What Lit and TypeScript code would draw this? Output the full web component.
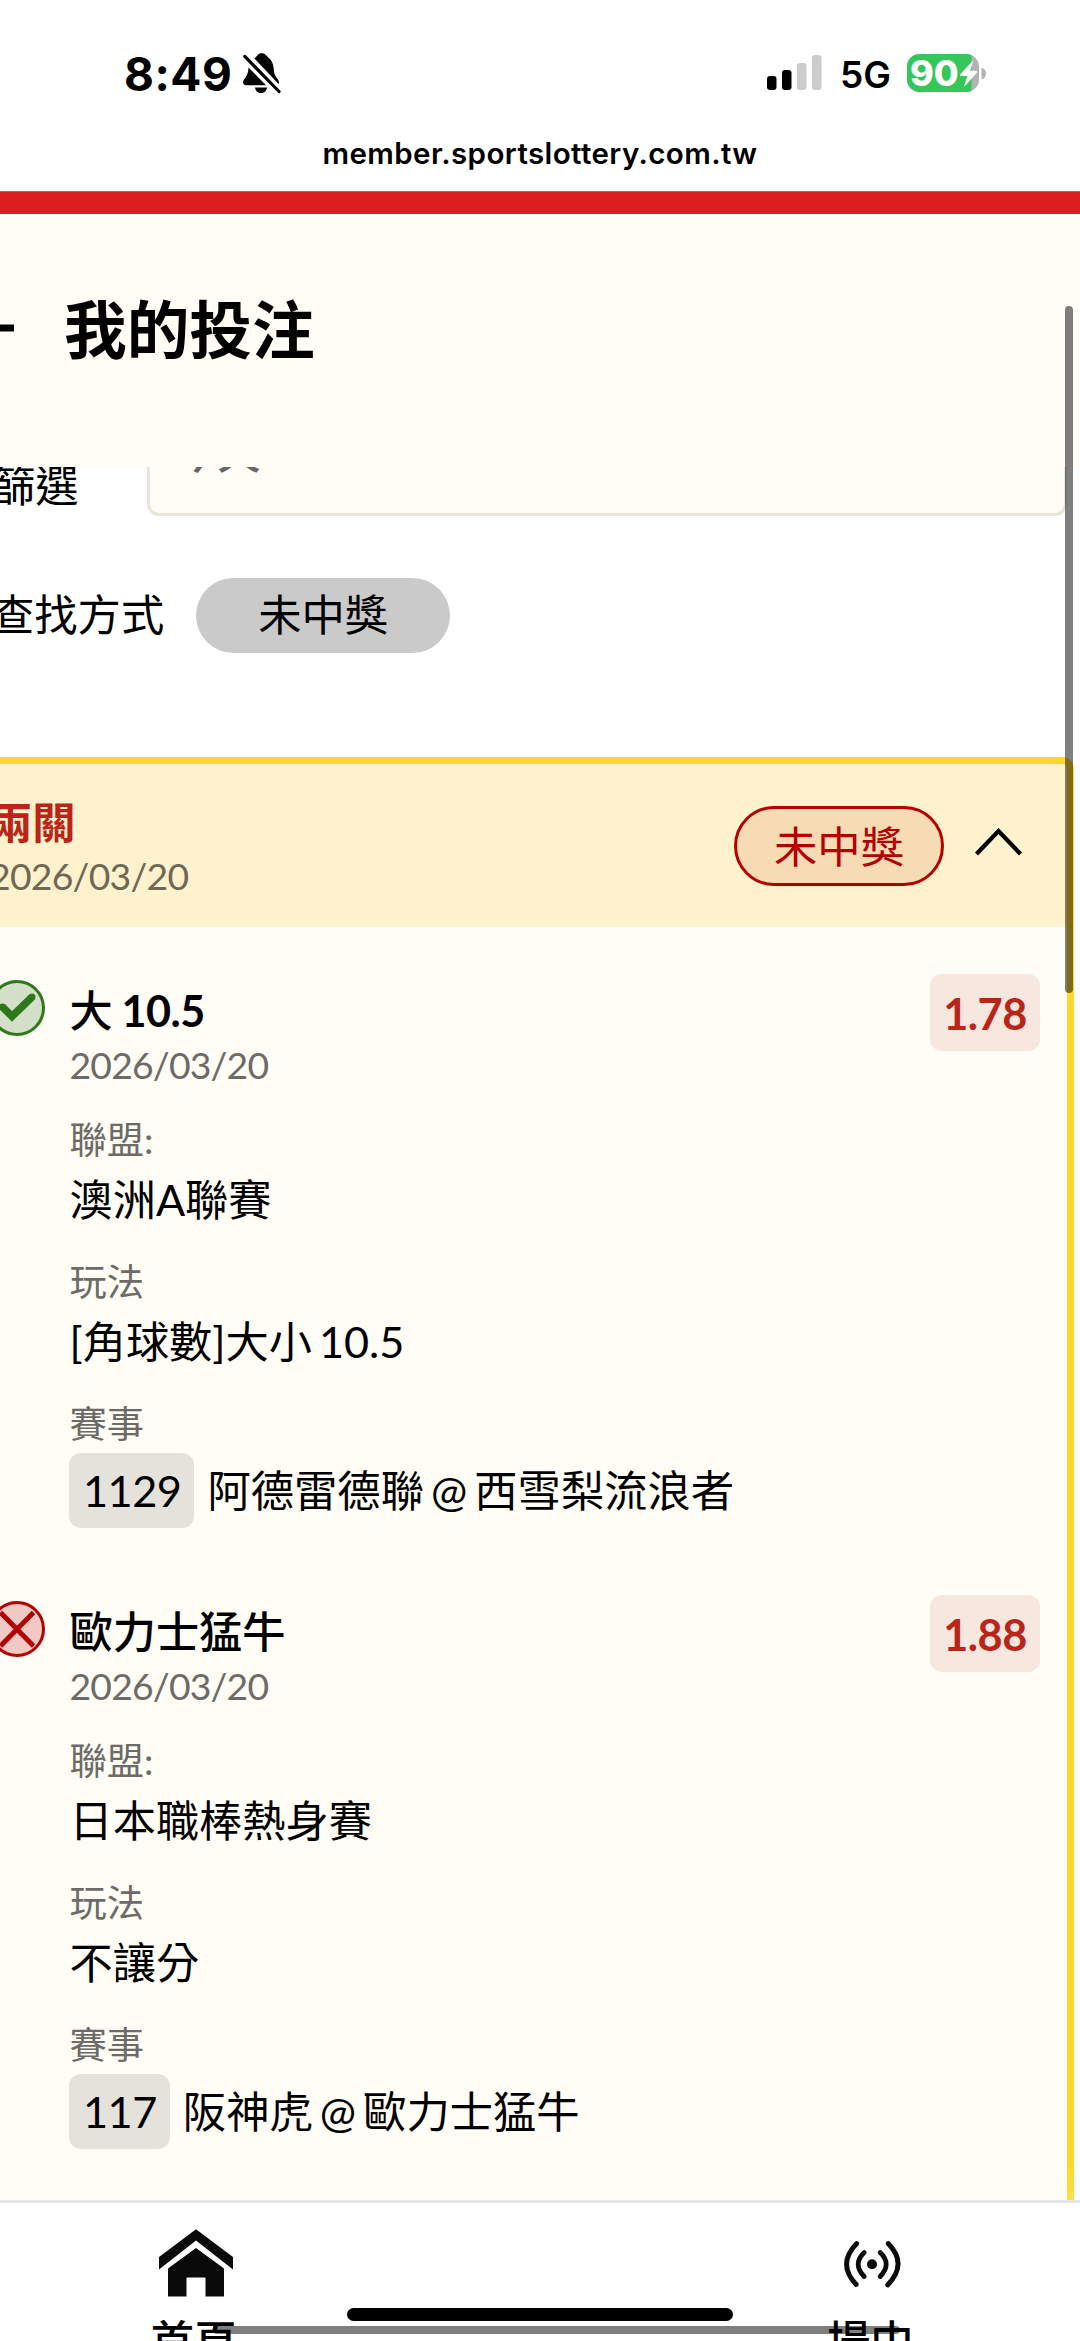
import { LitElement, html, css, svg } from "lit";
import { customElement, property } from "lit/decorators.js";

interface Bet {
  won: boolean;
  pick: string;
  date: string;
  odds: string;
  league: string;
  play: string;
  code: string;
  match: string;
}

const BETS: Bet[] = [
  { won: true, pick: "大 10.5", date: "2026/03/20", odds: "1.78", league: "澳洲A聯賽", play: "[角球數]大小 10.5", code: "1129", match: "阿德雷德聯 @ 西雪梨流浪者" },
  { won: false, pick: "歐力士猛牛", date: "2026/03/20", odds: "1.88", league: "日本職棒熱身賽", play: "不讓分", code: "117", match: "阪神虎 @ 歐力士猛牛" },
];

@customElement("status-bar")
class StatusBar extends LitElement {
  static styles = css`
    :host { display: flex; flex-direction: column; height: 191px; background: #fff; color: #000; font-family: Inter, "Liberation Sans", sans-serif; }
    .row { display: flex; align-items: center; height: 54px; padding: 46px 93px 0 124px; }
    .time { font-size: 46px; font-weight: 750; line-height: 54px; width: 117.500px; white-space: nowrap; letter-spacing: 0.500px; padding-top: 2px; }
    .bell { display: block; }
    .grow { flex: 1; }
    .signal { display: block; margin-right: 18px; }
    .net { font-size: 37px; font-weight: 600; line-height: 56px; width: 67px; white-space: nowrap; padding-top: 3px; }
    .battery { display: grid; width: 80px; height: 40px; margin-top: -1px; }
    .battery > * { grid-area: 1 / 1; }
    .level { font-size: 36px; line-height: 40px; font-weight: 850; color: #fff; padding-left: 3px; }
    .bolt { display: block; }
    .url { padding-top: 33px; text-align: center; font-size: 29.500px; line-height: 40px; font-weight: 600; letter-spacing: 0.400px; }
  `;
  render() {
    return html`
      <div class="row">
        <span class="time">8:49</span>
        <svg class="bell" width="40" height="42" viewBox="0 0 40 42">
          <path d="M12.500 6.500C14 5 14.500 4.200 15.500 3.200C17.500 .6 22 .6 24 3.200C25 4.400 26 5.200 27.500 6.500C30.500 9.500 31.500 13 32 19C32.300 23 34 25 36 27.500C37 29 37.200 30.500 36.500 32Z" />
          <path d="M6.500 15.500L24 33.200H4C1 33.200 .3 30 2 27.500C4.500 24.500 6.200 22 6.500 15.500Z" />
          <path d="M13 35.500H25C24.500 39.200 22 41 19 41S13.500 39.200 13 35.500Z" />
          <path d="M2.800 4.400L38 40.500" stroke="#fff" stroke-width="7" />
          <path d="M2.800 4.400L37 39.500" stroke="#000" stroke-width="3.200" stroke-linecap="round" />
        </svg>
        <span class="grow"></span>
        <svg class="signal" width="55" height="36" viewBox="0 0 55 36">
          <rect x="0" y="21" width="9.500" height="14" rx="3" />
          <rect x="15" y="15" width="9.500" height="20" rx="3" />
          <rect x="30" y="8" width="9.500" height="27" rx="3" fill="#ccc" />
          <rect x="45" y="0" width="9.500" height="35" rx="3" fill="#ccc" />
        </svg>
        <span class="net">5G</span>
        <div class="battery">
          <svg width="80" height="40" viewBox="0 0 80 40">
            <clipPath id="body"><rect x="0" y="1" width="72" height="38" rx="12.500" /></clipPath>
            <g clip-path="url(#body)">
              <rect width="80" height="40" fill="#b3b3b3" />
              <rect width="64.500" height="40" fill="#34c759" />
            </g>
            <path d="M74.500 14.500C77.500 15.500 79 17.500 79 20.500S77.500 25.500 74.500 26.500Z" fill="#b3b3b3" />
          </svg>
          <span class="level">90</span>
          <svg class="bolt" width="80" height="40" viewBox="0 0 80 40">
            <path d="M65.500 8L53 21.500Q52.500 23 54 23H60.500L57 33Q57.500 33.500 58.500 32.500L70 19.500Q70.500 18 69 17.700H63L66 9Z" fill="#fff" />
          </svg>
        </div>
      </div>
      <div class="url">member.sportslottery.com.tw</div>
    `;
  }
}

@customElement("bet-item")
class BetItem extends LitElement {
  @property({ attribute: false }) bet!: Bet;
  static styles = css`
    :host { display: flex; align-items: flex-start; font-family: Lato, "Noto Sans CJK TC", sans-serif; color: #000; }
    .mark { display: block; flex: none; margin: 1px 24.500px 0 0; }
    .info { flex: 1; display: flex; flex-direction: column; align-items: flex-start; white-space: nowrap; }
    .pick { font-size: 43.200px; line-height: 60px; font-weight: 700; height: 60px; padding-top: 1px; box-sizing: border-box; letter-spacing: -0.600px; word-spacing: -1px; }
    .cjk { font-family: "Noto Sans CJK TC", sans-serif; font-weight: 500; line-height: 1; letter-spacing: 0; }
    .date { font-size: 37.300px; line-height: 50px; margin: 1px 0 25px; color: #6c6b68; letter-spacing: -0.800px; }
    .label { font-size: 37.300px; line-height: 50px; color: #6c6b68; }
    .value { font-size: 43.200px; line-height: 60px; margin: 4px 0 28px; word-spacing: -4px; }
    .match { display: flex; align-items: center; gap: 13px; margin-top: 4px; font-size: 43.300px; line-height: 75px; word-spacing: -4px; }
    .code { background: #e5e2dc; border-radius: 12px; padding: 0 13px 0 14px; letter-spacing: -0.500px; margin-left: -0.500px; }
    .odds { flex: none; margin: -5px 0 0; width: 110px; height: 77px; border-radius: 12px; background: #f7e7df; color: #b92518; font-size: 43.300px; font-weight: 700; line-height: 78px; text-align: center; letter-spacing: -0.500px; }
  `;
  private mark() {
    return this.bet.won
      ? svg`<circle cx="28" cy="28" r="26.500" fill="#d4dfc9" stroke="#2f7819" stroke-width="3"/><path d="M13.500 27L23 36.500L43 17" fill="none" stroke="#2f7819" stroke-width="7.500"/><circle cx="43" cy="17" r="3.500" fill="#2f7819"/><circle cx="13.500" cy="27" r="3.500" fill="#2f7819"/>`
      : svg`<circle cx="28" cy="28" r="26.500" fill="#f0c9c4" stroke="#b40000" stroke-width="3"/><path d="M11.500 11.500L44.500 45M44.500 11.500L11.500 45" stroke="#b40000" stroke-width="4.800"/>`;
  }
  render() {
    const b = this.bet;
    return html`
      <svg class="mark" width="56" height="56" viewBox="0 0 56 56">${this.mark()}</svg>
      <div class="info">
        <div class="pick">${b.pick.split(" ").map((t, i) => (i ? html` ${t}` : html`<span class="cjk">${t}</span>`))}</div>
        <div class="date">${b.date}</div>
        <div class="label">聯盟:</div>
        <div class="value">${b.league}</div>
        <div class="label">玩法</div>
        <div class="value">${b.play}</div>
        <div class="label">賽事</div>
        <div class="match"><span class="code">${b.code}</span><span>${b.match}</span></div>
      </div>
      <div class="odds">${b.odds}</div>
    `;
  }
}

@customElement("app-root")
class AppRoot extends LitElement {
  static styles = css`
    :host { display: flex; flex-direction: column; position: relative; width: 1080px; height: 2341px; overflow: hidden; background: #fff; color: #000; font-family: Lato, "Noto Sans CJK TC", sans-serif; }
    * { box-sizing: border-box; }
    .brand { flex: none; height: 22.500px; background: #dc1e20; border-top: 1px solid #a66; }
    .head { flex: none; display: flex; align-items: center; gap: 50px; height: 253.500px; padding-bottom: 23px; background: #fffdf5; }
    .back { display: block; }
    .title { margin: -5px 0 0; font-size: 62.700px; line-height: 90px; font-weight: 700; font-family: "Noto Sans CJK TC", sans-serif; }
    .filters { flex: none; height: 290px; overflow: hidden; font-size: 43.300px; line-height: 60px; white-space: nowrap; }
    .filter { display: flex; margin: -53px 0 0 -9px; }
    .filter-name { width: 156px; padding: 41px 0 0 1px; }
    .select { width: 920px; height: 102px; border: 3px solid #e8e5dd; border-radius: 12px; background: #fffdf5; color: #666; font-weight: 500; padding: 5px 0 0 24px; }
    .search { display: flex; align-items: center; gap: 32px; margin: 62px 0 0 -9px; height: 75px; }
    .search-name { margin-top: -3px; }
    .chip { width: 254px; height: 75px; border-radius: 38px; background: #cacaca; text-align: center; line-height: 73px; }
    .card { flex: none; height: 1443px; margin: 0 6px 0 -20px; border: 7px solid #ffd829; border-bottom: 0; border-top-right-radius: 12px; background: #fffdf5; overflow: hidden; }
    .summary { display: flex; align-items: center; height: 163px; padding: 0 44px 0 2px; background: #fff2cc; }
    .kind { flex: 1; padding-top: 3px; }
    .kind-name { font-size: 43.300px; line-height: 57px; font-weight: 700; color: #b92518; }
    .kind-date { font-size: 37.300px; line-height: 50px; color: #6e6855; letter-spacing: -0.750px; }
    .result { width: 210px; height: 80px; border: 3px solid #b40000; border-radius: 40px; background: #f7dbb5; color: #b40000; font-size: 43.300px; line-height: 74px; text-align: center; }
    .chevron { display: block; margin: -8px 0 0 30px; }
    .bets { display: flex; flex-direction: column; gap: 72px; padding: 52px 27px 0 2px; }
    .nav { flex: none; display: flex; height: 141px; border-top: 3px solid #e5e5e5; background: #fff; font-size: 43.300px; line-height: 60px; font-weight: 500; box-shadow: 0 -4px 36px rgba(255, 255, 255, 0.4); }
    .tab { flex: none; display: flex; flex-direction: column; align-items: center; width: 392px; }
    .tab-live { width: 960.600px; }
    .icon { display: block; flex: none; margin-top: 25px; }
    .tab-name { flex: none; margin: 12px 4px 0 0; }
    .v-scroll { position: absolute; left: 1065px; top: 306px; width: 8px; height: 687px; border-radius: 4px; background: rgba(0, 0, 0, 0.5); }
    .h-scroll { position: absolute; left: 213px; top: 2326px; width: 687px; height: 8px; border-radius: 4px; background: rgba(0, 0, 0, 0.5); }
    .indicator { position: absolute; left: 347px; top: 2308px; width: 386px; height: 13px; border-radius: 7px; background: #000; }
  `;
  render() {
    return html`
      <status-bar></status-bar>
      <div class="brand"></div>
      <header class="head">
        <svg class="back" width="14" height="40" viewBox="0 0 14 40"><path d="M0 19H14" stroke="#000" stroke-width="7" /></svg>
        <h1 class="title">我的投注</h1>
      </header>
      <section class="filters">
        <div class="filter"><span class="filter-name">篩選</span><div class="select">今天</div></div>
        <div class="search"><span class="search-name">查找方式</span><span class="chip">未中獎</span></div>
      </section>
      <section class="card">
        <div class="summary">
          <div class="kind"><div class="kind-name">兩關</div><div class="kind-date">2026/03/20</div></div>
          <div class="result">未中獎</div>
          <svg class="chevron" width="49" height="28" viewBox="0 0 49 28"><path d="M2.500 26L24.500 3L46.500 26" fill="none" stroke="#000" stroke-width="4.200" /></svg>
        </div>
        <div class="bets">${BETS.map((b) => html`<bet-item .bet=${b}></bet-item>`)}</div>
      </section>
      <nav class="nav">
        <div class="tab">
          <svg class="icon" width="74" height="70" viewBox="159 2228 74 70"><path fill="#0a0a0a" d="M196 2229.300L233 2257V2269.500L196 2240.500L159 2269.500V2257ZM196 2248L224 2268.500V2296.500H205.500V2277.500H186.500V2296.500H168V2268.500Z" /></svg>
          <span class="tab-name">首頁</span>
        </div>
        <div class="tab tab-live">
          <svg class="icon" width="74" height="70" viewBox="835.300 2228 74 70">
            <circle cx="872.300" cy="2264.300" r="5" fill="#0a0a0a" />
            <g fill="none" stroke="#0a0a0a" stroke-width="4.800" stroke-linecap="round">
              <path d="M864.500 2252.500Q852.500 2264 864.500 2276.500M880.500 2252.500Q892.500 2264 880.500 2276.500" />
              <path d="M857 2243.500Q837 2264 856.500 2284.500M888.500 2243.500Q908.500 2264 888 2285" />
            </g>
          </svg>
          <span class="tab-name">場中</span>
        </div>
      </nav>
      <div class="v-scroll"></div>
      <div class="h-scroll"></div>
      <div class="indicator"></div>
    `;
  }
}
